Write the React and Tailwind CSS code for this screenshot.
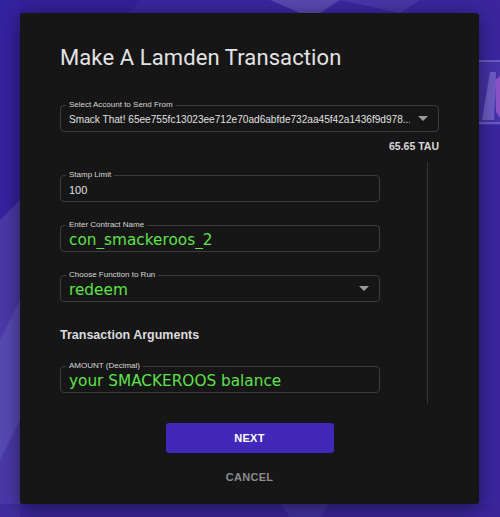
import React from 'react';

const Field = ({ label, children, arrow, className = '' }) => (
  <div className={`relative rounded-[4px] border border-[#3c3c3c] h-[27px] flex items-center pl-2 pr-2 ${className}`}>
    <span className="absolute -top-[6px] left-[5px] px-[3px] bg-[#161616] text-[8px] leading-[10px] text-[#d6d6d6] font-['Liberation_Sans',sans-serif]">
      {label}
    </span>
    <div className="flex-1 min-w-0 pt-[3px] overflow-hidden">{children}</div>
    {arrow && (
      <svg width="10" height="6" viewBox="0 0 10 6" className="shrink-0 ml-2 mr-[2px]">
        <path d="M0 0 L10 0 L5 5 Z" fill="#9a9a9a" />
      </svg>
    )}
  </div>
);

const Background = () => (
  <svg className="absolute inset-0 w-full h-full" viewBox="0 0 500 517" preserveAspectRatio="none">
    <rect width="500" height="517" fill="#3b26a0" />
    <polygon points="0,0 140,0 90,60 0,90" fill="#33209a" />
    <polygon points="270,0 340,0 320,13 300,13" fill="#5a48b0" />
    <polygon points="340,0 420,0 400,13" fill="#4a36a8" />
    <polygon points="0,200 20,180 20,517 0,517" fill="#4a39a8" />
    <polygon points="0,340 20,300 20,420 0,460" fill="#5849b4" />
    <polygon points="0,0 20,0 20,200 0,220" fill="#3522a0" />
    <polygon points="479,60 500,60 500,125 479,125" fill="#4632aa" />
    <rect x="479" y="60" width="21" height="2" fill="#6b5ac0" />
    <rect x="479" y="122" width="21" height="2" fill="#6b5ac0" />
    <polygon points="482,120 490,72 496,72 494,120" fill="#6d5cc4" />
    <polygon points="495,80 500,76 500,118 496,112" fill="#8a52c8" />
    <polygon points="280,504 330,504 320,517 290,517" fill="#5546ae" />
    <polygon points="0,504 500,504 500,517 0,517" fill="#3a2598" opacity="0.6" />
  </svg>
);

export default function App() {
  return (
    <div className="relative w-[500px] h-[517px] overflow-hidden font-['Roboto',sans-serif]">
      <Background />
      <div className="absolute left-[20px] top-[13px] w-[459px] h-[491px] bg-[#161616] rounded-[3px] shadow-[0_4px_20px_rgba(0,0,0,0.5)] pl-[40px] pr-[40px] pt-[32px]">
        <h1 className="text-[22px] leading-[26px] text-[#e3e3e3] font-normal tracking-[0.1px]">
          Make A Lamden Transaction
        </h1>

        <Field label="Select Account to Send From" arrow className="mt-[34px]">
          <div className="text-[10.1px] leading-[14px] text-[#e0e0e0] whitespace-nowrap font-['Liberation_Sans',sans-serif]">
            Smack That! 65ee755fc13023ee712e70ad6abfde732aa45f42a1436f9d978...
          </div>
        </Field>
        <div className="text-right text-[10.5px] font-bold text-[#d8d8d8] mt-[7px] leading-[14px] font-['Liberation_Sans',sans-serif]">65.65 TAU</div>

        <div className="flex mt-[3px]">
          <div className="w-[320px]">
            <Field label="Stamp Limit" className="mt-[19px]">
              <div className="text-[11px] leading-[14px] text-[#e0e0e0] font-['Liberation_Sans',sans-serif]">100</div>
            </Field>
            <Field label="Enter Contract Name" className="mt-[23px]">
              <div className="text-[15.3px] leading-[18px] text-[#5fe24b] font-['DejaVu_Sans',sans-serif]">con_smackeroos_2</div>
            </Field>
            <Field label="Choose Function to Run" arrow className="mt-[23px]">
              <div className="text-[15.3px] leading-[18px] text-[#5fe24b] font-['DejaVu_Sans',sans-serif]">redeem</div>
            </Field>
            <h2 className="text-[12.5px] font-bold text-[#dcdcdc] mt-[25px] leading-[16px] font-['Liberation_Sans',sans-serif]">Transaction Arguments</h2>
            <Field label="AMOUNT (Decimal)" className="mt-[23px]">
              <div className="text-[15.3px] leading-[18px] text-[#5fe24b] font-['DejaVu_Sans',sans-serif]">your SMACKEROOS balance</div>
            </Field>
          </div>
          <div className="ml-[47px] mt-[6px] w-px h-[242px] bg-[#353535]" />
        </div>

        <div className="flex flex-col items-center mt-[19px]">
          <button className="w-[168px] h-[30px] rounded-[3px] bg-[#4128b8] text-white text-[11px] font-bold tracking-[0.3px] font-['Liberation_Sans',sans-serif]">
            NEXT
          </button>
          <button className="mt-[16px] text-[11px] font-bold text-[#8a8a8a] tracking-[0.3px] font-['Liberation_Sans',sans-serif]">CANCEL</button>
        </div>
      </div>
    </div>
  );
}
